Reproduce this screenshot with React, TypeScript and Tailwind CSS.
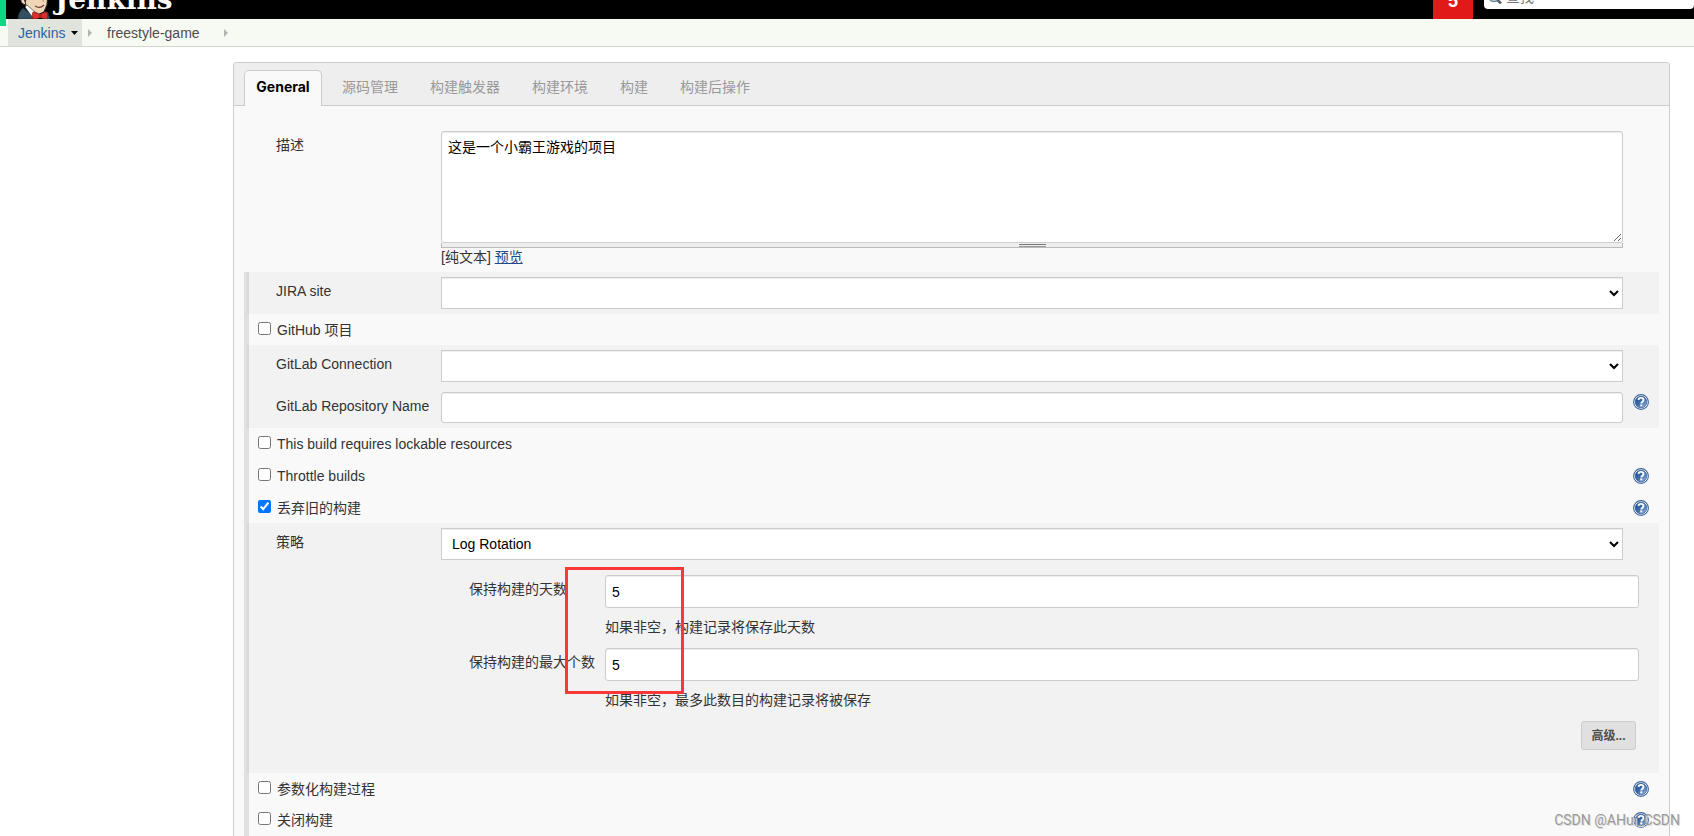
import type { ReactNode } from 'react';

const inputClass =
  'block w-full rounded-[3px] border border-[#ccc] bg-white px-1.5 text-sm text-black shadow-[inset_0_1px_1px_rgba(0,0,0,0.075)] outline-none';

function HelpIcon() {
  return (
    <svg viewBox="0 0 16 16" className="size-4" aria-hidden="true">
      <defs>
        <linearGradient id="help-fill" x1="0" y1="0" x2="1" y2="1">
          <stop offset="0" stopColor="#204a87" />
          <stop offset="0.5" stopColor="#3d6cab" />
          <stop offset="1" stopColor="#9dbce4" />
        </linearGradient>
      </defs>
      <circle cx="8" cy="8" r="7.4" fill="#fff" stroke="#3d659d" strokeWidth="1.1" />
      <circle cx="8" cy="8" r="5.8" fill="url(#help-fill)" stroke="#2c548d" strokeWidth="0.7" />
      <path d="M5.500 5.900C5.600 4.500 6.700 3.900 8 3.900c1.500 0 2.500.8 2.500 2.100 0 1.700-2.200 1.700-2.200 3.500" fill="none" stroke="#fff" strokeWidth="1.9" />
      <rect x="7.300" y="10.400" width="2" height="2" fill="#fff" />
    </svg>
  );
}

function HelpButton({ label }: { label: string }) {
  return (
    <button type="button" aria-label={`${label} help`} className="block size-4">
      <HelpIcon />
    </button>
  );
}

function Butler() {
  return (
    <svg viewBox="0 0 34 40" className="h-10 w-[34px]" aria-hidden="true">
      <path d="M5 12C5 4 10 1 18 1s13 5 13 12l-1 13-3 7-7 3-9-5-5-8z" fill="#f0d6b7" stroke="#2b2320" strokeWidth="1.100" />
      <path d="M5 16C3 6 9 1 17 1c9 0 14 5 13 11-5-5-12-6-16-5-3 2-3 5-4 9l-1 7-3 1z" fill="#4a3a32" />
      <path d="M7 19c-4-1-4 4-1 6l3 1z" fill="#f0d6b7" stroke="#2b2320" strokeWidth="1" />
      <path d="M6 29l9 7 4 4H1c0-5 2-8 5-11zM27 32l4 2 2 6h-7z" fill="#335061" stroke="#1a2a35" strokeWidth="0.800" />
      <path d="M8 28l2-2 9 8-2 6-4-5z" fill="#fff" stroke="#1a2a35" strokeWidth="0.600" />
      <path d="M18 27c3 2 6 2 9-1" fill="none" stroke="#6b3b2e" strokeWidth="1.100" />
      <path d="M24 19c2 1 3 2 2 4" fill="none" stroke="#b08b6b" strokeWidth="0.900" />
      <path d="M16 33c3 0 5 1 7 3 2-2 4-3 7-3 1 2 1 5 0 7-3 0-5-1-7-2-2 2-4 2-7 2-1-2-1-5 0-7z" fill="#d8302b" stroke="#7c1512" strokeWidth="0.700" />
      <path d="M22 35h3v4h-3z" fill="#b3221e" />
    </svg>
  );
}

function Header() {
  return (
    <header className="flex h-[19px] items-end overflow-hidden bg-black pl-4">
      <a href="#" className="flex h-10 items-end pl-px text-white">
        <Butler />
        <span className="pb-[3px] pl-1 font-['DejaVu_Serif','Noto_Sans_CJK_SC',serif] text-[28px] leading-8 font-bold">
          Jenkins
        </span>
      </a>
      <div className="ml-auto flex h-10 shrink-0">
        <a
          href="#"
          className="flex w-10 items-center justify-center bg-[#e11919] pt-1 text-lg leading-5 font-bold text-white"
        >
          5
        </a>
        <div className="ml-[11px] flex h-[30px] w-[210px] items-center gap-1 rounded-[4px] bg-white pt-1.5 pl-1">
          <svg viewBox="0 0 14 14" className="size-[14px] shrink-0" aria-hidden="true">
            <circle cx="6" cy="6.500" r="5.200" fill="#a9cdf2" stroke="#7a8794" strokeWidth="1.300" />
            <path d="M9.500 10l3.500 3.500" stroke="#5c6266" strokeWidth="2.600" />
          </svg>
          <input type="text" aria-label="查找" placeholder="查找" className="w-full bg-transparent text-sm outline-none placeholder:text-[#757575]" />
        </div>
      </div>
    </header>
  );
}

function Separator() {
  return (
    <svg viewBox="0 0 4 8" className="h-2 w-1" aria-hidden="true">
      <path d="M0 0l4 4-4 4z" fill="#b5b5b5" />
    </svg>
  );
}

function Breadcrumbs() {
  return (
    <nav className="flex h-7 items-stretch border-b border-[#d3d7cf] bg-[#f6faf2] pl-2">
      <div className="flex w-[74px] items-center bg-[#e1e4dc] pl-2.5">
        <a href="#" className="text-[#2f62a5]">
          Jenkins
        </a>
        <svg viewBox="0 0 7 4" className="ml-1.5 h-1 w-[7px]" aria-hidden="true">
          <path d="M0 0h7L3.500 4z" fill="#000" />
        </svg>
      </div>
      <div className="flex items-center pl-1.5">
        <Separator />
        <a href="#" className="pr-4 pl-[15px] text-[#4d4d4d]">
          freestyle-game
        </a>
        <span className="pl-2">
          <Separator />
        </span>
      </div>
    </nav>
  );
}

const tabs = ['源码管理', '构建触发器', '构建环境', '构建', '构建后操作'];

function Tabs() {
  return (
    <div className="flex h-[43px] items-end rounded-t-[3px] border-b border-[#ccc] bg-[#eee] pl-2.5" role="tablist">
      <button
        type="button"
        role="tab"
        aria-selected="true"
        className="-mb-px h-9 min-w-[78px] rounded-t-[5px] border border-b-0 border-[#ccc] bg-[#f9f9f9] px-2.5 pb-1 font-['Inter','Noto_Sans_CJK_SC',sans-serif] font-bold text-black"
      >
        General
      </button>
      <div className="ml-1 flex">
        {tabs.map((tab) => (
          <button key={tab} type="button" role="tab" aria-selected="false" className="h-[35px] px-4 pb-0.5 text-[#999]">
            {tab}
          </button>
        ))}
      </div>
    </div>
  );
}

function CheckRow({ id, label, checked, help }: { id: string; label: string; checked?: boolean; help?: boolean }) {
  return (
    <div className="flex h-[31px] items-center border-l-2 border-[#e0e0e0] pr-2.5 pl-[9px]">
      <input id={id} type="checkbox" defaultChecked={checked} className="mb-0.5 size-[13px]" />
      <label htmlFor={id} className="pl-1.5">
        {label}
      </label>
      {help && (
        <span className="ml-auto">
          <HelpButton label={label} />
        </span>
      )}
    </div>
  );
}

function Group({ children }: { children: ReactNode }) {
  return <div className="border-l-2 border-[#d9d9d9] bg-[#f2f2f2]">{children}</div>;
}

function Field({ id, label, help, children }: { id: string; label: string; help?: boolean; children: ReactNode }) {
  return (
    <div className="grid grid-cols-[165px_minmax(0,1fr)_36px] pt-[5px] pb-[5px] pl-[27px]">
      <label htmlFor={id} className="pt-1">
        {label}
      </label>
      {children}
      <span className="pt-0.5 pl-2.5">{help && <HelpButton label={label} />}</span>
    </div>
  );
}

function Select({ id, value }: { id: string; value: string }) {
  return (
    <select
      id={id}
      className="block h-8 w-full rounded-none border border-[#ccc] bg-white pr-px pl-1.5 text-sm text-black shadow-[inset_0_1px_1px_rgba(0,0,0,0.075)] outline-none"
    >
      <option>{value}</option>
    </select>
  );
}

function NestedField({ id, label, hint }: { id: string; label: string; hint: string }) {
  return (
    <div className="grid grid-cols-[136px_minmax(0,1fr)] pr-5 pl-[220px]">
      <label htmlFor={id} className="pt-1">
        {label}
      </label>
      <div>
        <input id={id} type="text" defaultValue="5" className={`${inputClass} h-[33px]`} />
        <p className="h-10 pt-[9px]">{hint}</p>
      </div>
    </div>
  );
}

export default function App() {
  return (
    <div className="relative h-screen overflow-hidden bg-white font-['Liberation_Sans','Noto_Sans_CJK_SC',sans-serif] text-sm text-[#333]">
      <Header />
      <div className="absolute top-0 left-0 h-[26px] w-1.5 bg-[#0bd882]" />
      <Breadcrumbs />
      <main className="mt-[15px] mr-6 ml-[233px] rounded-[3px] border border-[#ccc] bg-[#f9f9f9] pb-10">
        <Tabs />
        <form className="px-2.5">
          <div className="grid grid-cols-[165px_minmax(0,1fr)] pt-[25px] pr-9 pb-1.5 pl-8">
            <label htmlFor="description" className="pt-1">
              描述
            </label>
            <div>
              <textarea
                id="description"
                defaultValue="这是一个小霸王游戏的项目"
                className={`${inputClass} h-28 py-[5px] leading-5`}
              />
              <div className="flex h-[5px] flex-col items-center justify-center gap-px border border-t-0 border-[#babdb6] bg-[#eee]">
                <span className="h-px w-[27px] bg-[#777]" />
                <span className="h-px w-[27px] bg-[#999]" />
              </div>
              <p className="leading-[18px]">
                [纯文本]{' '}
                <a href="#" className="text-[#204a87] underline">
                  预览
                </a>
              </p>
            </div>
          </div>
          <div className="border-l-[3px] border-[#e0e0e0]">
            <Group>
              <Field id="jira" label="JIRA site">
                <Select id="jira" value="" />
              </Field>
            </Group>
            <CheckRow id="github" label="GitHub 项目" />
            <Group>
              <Field id="gitlab" label="GitLab Connection">
                <Select id="gitlab" value="" />
              </Field>
              <Field id="repository" label="GitLab Repository Name" help>
                <input id="repository" type="text" className={`${inputClass} h-[31px]`} />
              </Field>
            </Group>
            <div className="flex flex-col gap-px bg-[linear-gradient(to_right,#e0e0e0_2px,transparent_2px)]">
              <CheckRow id="lockable" label="This build requires lockable resources" />
              <CheckRow id="throttle" label="Throttle builds" help />
              <CheckRow id="discard" label="丢弃旧的构建" checked help />
            </div>
            <Group>
              <Field id="strategy" label="策略">
                <Select id="strategy" value="Log Rotation" />
              </Field>
              <div className="pt-2.5">
                <NestedField id="days" label="保持构建的天数" hint="如果非空，构建记录将保存此天数" />
                <NestedField id="count" label="保持构建的最大个数" hint="如果非空，最多此数目的构建记录将被保存" />
                <div className="flex justify-end pr-[23px] pb-[23px]">
                  <button
                    type="button"
                    className="h-[29px] w-[55px] rounded-[3px] border border-[#ccc] bg-[#e0e0e0] text-xs font-bold text-[#4d4d4d]"
                  >
                    高级...
                  </button>
                </div>
              </div>
            </Group>
            <CheckRow id="params" label="参数化构建过程" help />
            <CheckRow id="disable" label="关闭构建" help />
            <div className="h-8 border-l-2 border-[#e0e0e0]" />
          </div>
        </form>
      </main>
      <div className="pointer-events-none absolute top-[567px] left-[565px] h-[127px] w-[119px] border-[3px] border-[#fb3838]" />
      <div className="pointer-events-none absolute right-3.5 bottom-1.5 font-['Roboto','Noto_Sans_CJK_SC',sans-serif] text-sm leading-5 text-[#999] [text-shadow:1px_1px_0_#ddd]">
        CSDN @AHui_CSDN
      </div>
    </div>
  );
}
